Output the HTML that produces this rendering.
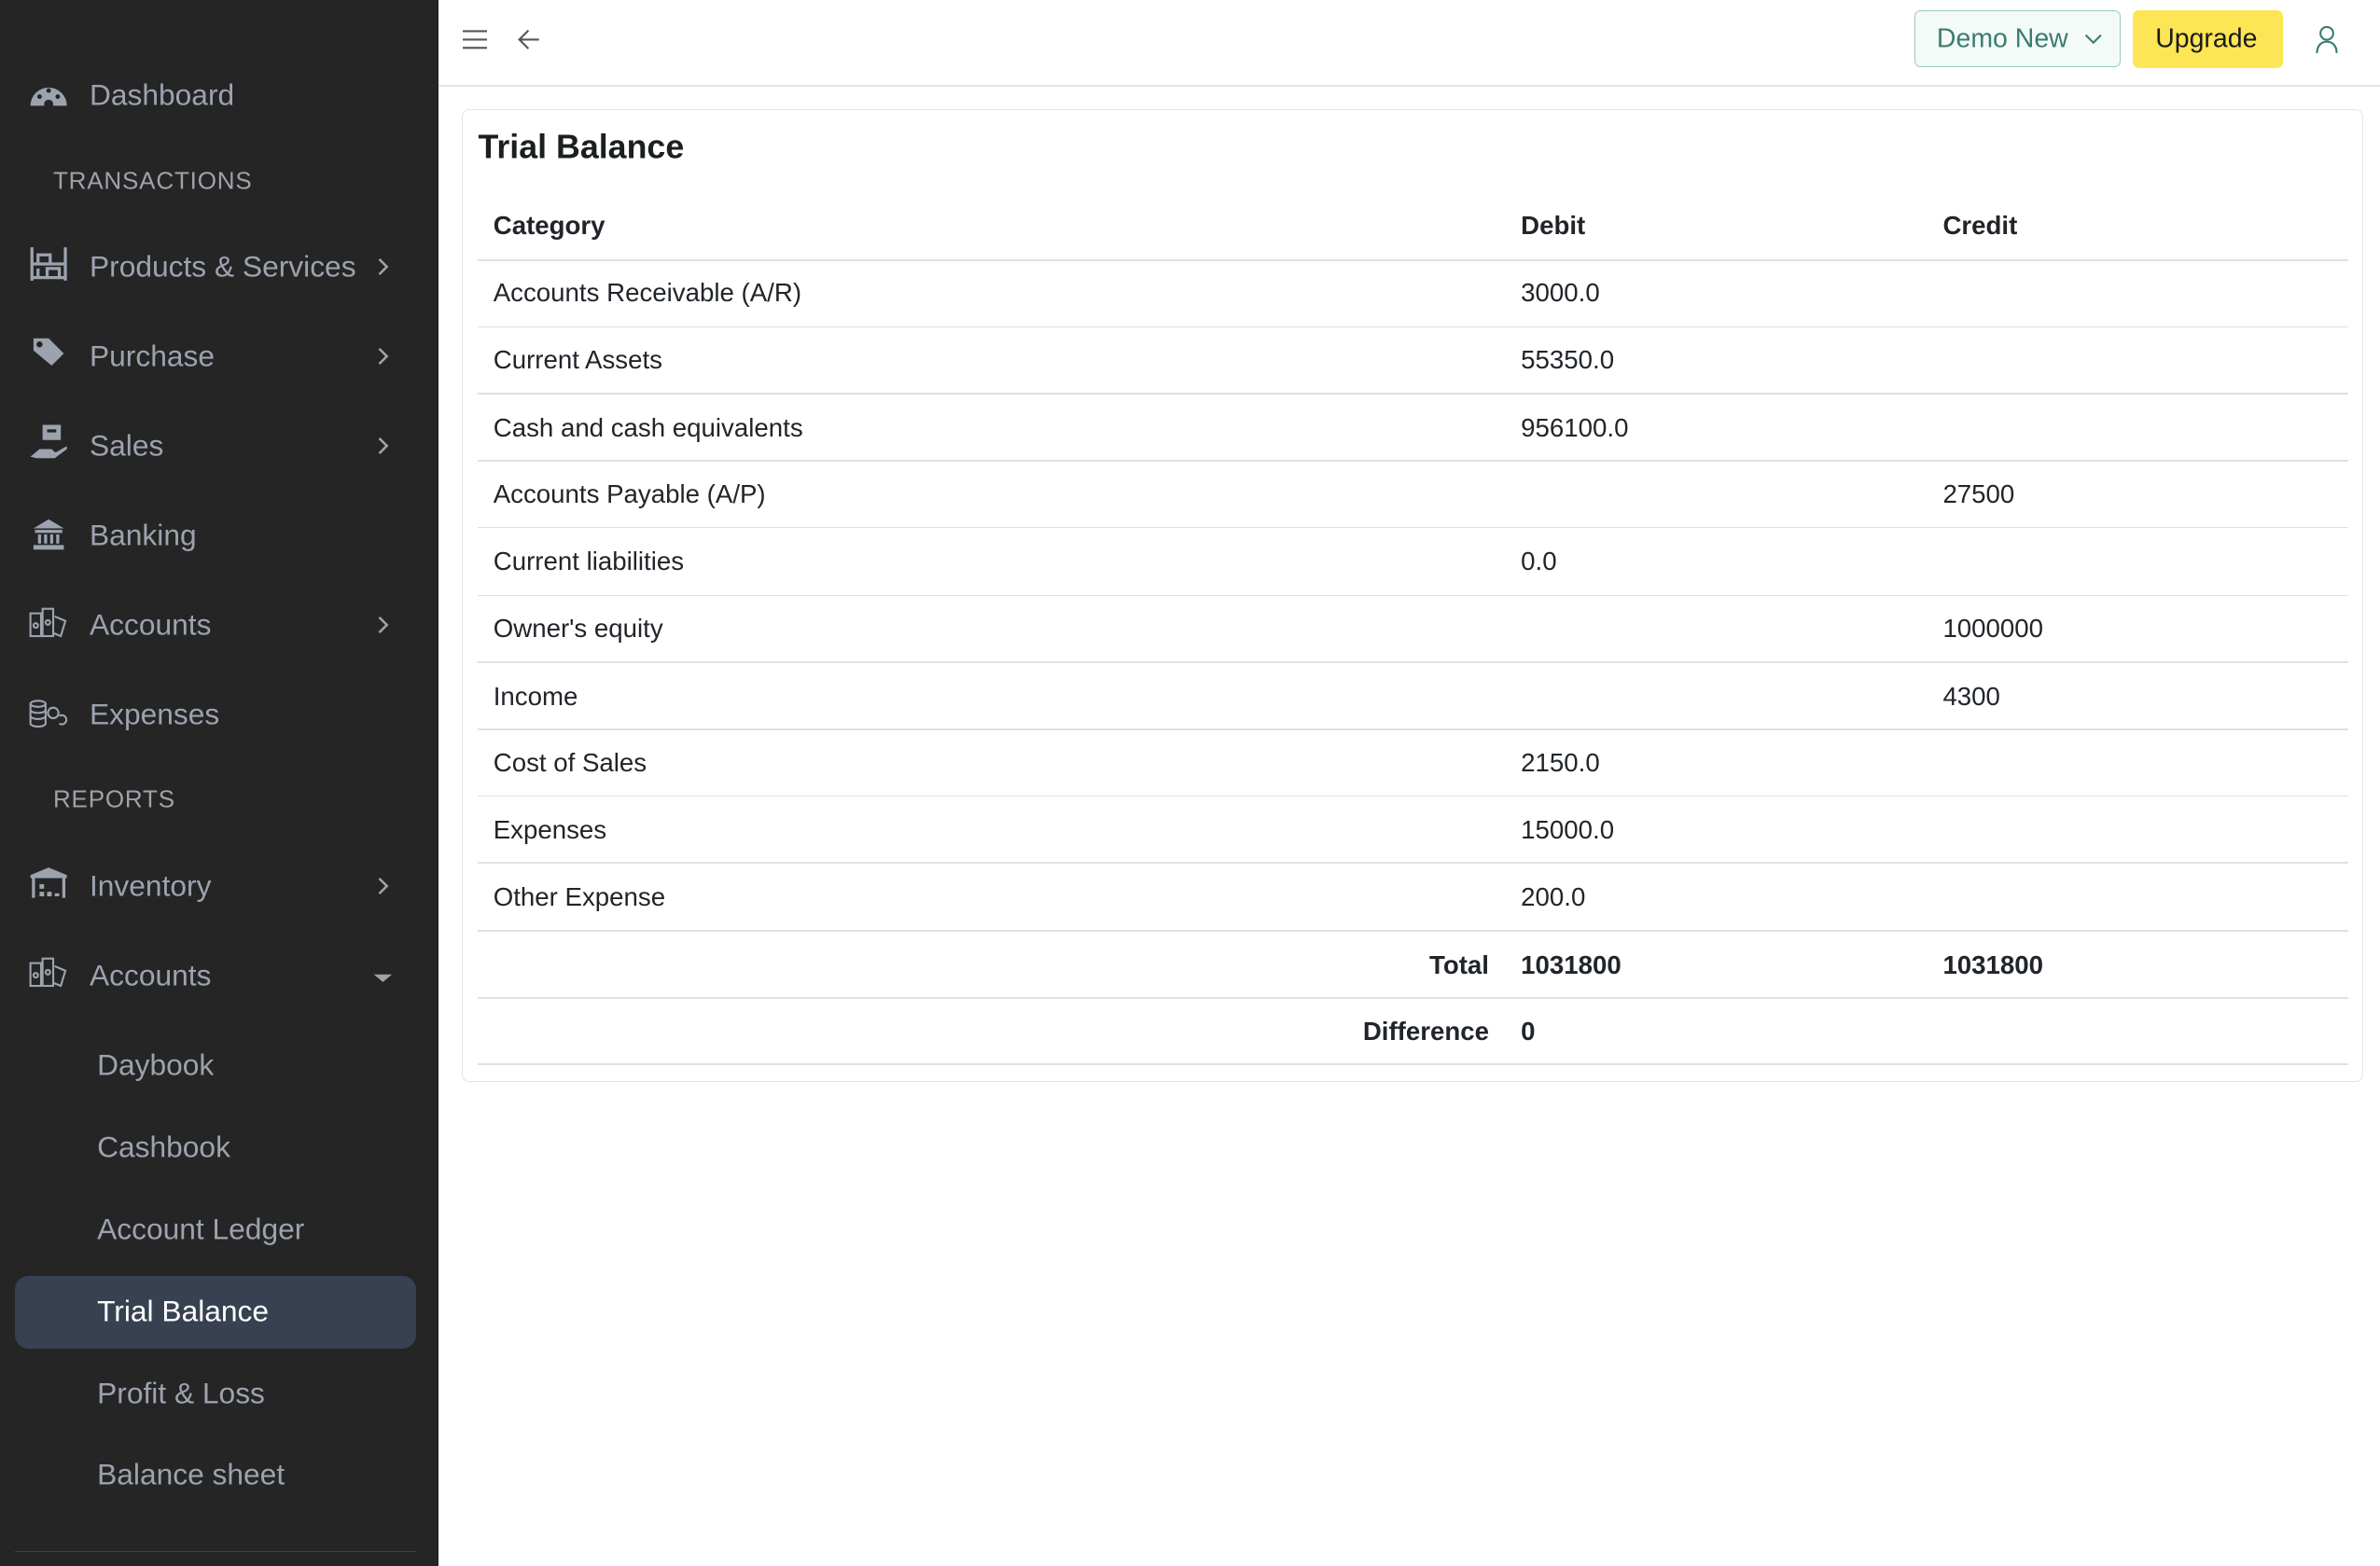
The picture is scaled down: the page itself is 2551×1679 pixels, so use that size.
<!DOCTYPE html>
<html><head><meta charset="utf-8"><style>
html,body{margin:0;padding:0;}
html{zoom:1.62691;}
body{width:1568px;height:1032px;position:relative;overflow:hidden;background:#fff;font-family:"Liberation Sans",sans-serif;}
.sb{position:absolute;left:0;top:0;width:289px;height:1032px;background:#252525;}
.it{position:absolute;left:59px;font-size:19.5px;color:#9ca3af;line-height:24px;transform:translateY(-50%);white-space:nowrap;}
.sub{left:64px;}
.hd{position:absolute;left:35px;font-size:16px;color:#a1a1aa;letter-spacing:0.5px;transform:translateY(-50%);}
.ic{position:absolute;left:19px;width:26px;height:26px;transform:translateY(-50%);}
.ch{position:absolute;left:246px;width:12px;height:12px;transform:translateY(-50%);}
.t{position:absolute;font-size:17px;color:#212529;transform:translateY(-50%);white-space:nowrap;}
.b{font-weight:bold;}
.ln{position:absolute;left:315px;width:1232px;height:1px;background:#dee2e6;}
</style></head><body>
<div class="sb">
<svg class="ic" style="top:63px" viewBox="0 0 26 26"><path d="M1 20 A12 12 0 0 1 25 20 Z" fill="#9ca3af"/><circle cx="13" cy="19" r="3" fill="#252525"/><circle cx="7" cy="14" r="1.5" fill="#252525"/><circle cx="19" cy="14" r="1.5" fill="#252525"/><circle cx="13" cy="10" r="1.5" fill="#252525"/></svg>
<div class="it" style="top:63px">Dashboard</div>
<div class="hd" style="top:119px">TRANSACTIONS</div>
<svg class="ic" style="top:174px" viewBox="0 0 26 26" fill="none" stroke="#9ca3af" stroke-width="2"><path d="M2 2v22M24 2v22M2 22h22M2 13h22M6 13V7h8v6M12 22v-6h8v6M6 22v-6"/></svg>
<div class="it" style="top:176px">Products &amp; Services</div>
<svg class="ch" style="top:176px" viewBox="0 0 12 12"><path d="M4 1l5 5-5 5" fill="none" stroke="#9ca3af" stroke-width="1.6"/></svg>
<svg class="ic" style="top:233px" viewBox="0 0 26 26"><path d="M3 3h10l10 10-8 8L3 11z" fill="#9ca3af"/><circle cx="7" cy="7" r="2" fill="#252525"/></svg>
<div class="it" style="top:235px">Purchase</div>
<svg class="ch" style="top:235px" viewBox="0 0 12 12"><path d="M4 1l5 5-5 5" fill="none" stroke="#9ca3af" stroke-width="1.6"/></svg>
<svg class="ic" style="top:292px" viewBox="0 0 26 26"><rect x="9" y="1" width="12" height="10" fill="#9ca3af"/><rect x="12" y="4" width="6" height="2" fill="#252525"/><path d="M1 22l6-5h8l2 2H10h8l7-4v2l-8 6H5z" fill="#9ca3af"/></svg>
<div class="it" style="top:294px">Sales</div>
<svg class="ch" style="top:294px" viewBox="0 0 12 12"><path d="M4 1l5 5-5 5" fill="none" stroke="#9ca3af" stroke-width="1.6"/></svg>
<svg class="ic" style="top:352px" viewBox="0 0 26 26"><path d="M3 9L13 3l10 6z" fill="#9ca3af"/><rect x="4" y="10" width="18" height="2" fill="#9ca3af"/><rect x="6" y="13" width="2" height="6" fill="#9ca3af"/><rect x="10" y="13" width="2" height="6" fill="#9ca3af"/><rect x="14" y="13" width="2" height="6" fill="#9ca3af"/><rect x="18" y="13" width="2" height="6" fill="#9ca3af"/><rect x="3" y="20" width="20" height="3" fill="#9ca3af"/></svg>
<div class="it" style="top:353px">Banking</div>
<svg class="ic" style="top:411px" viewBox="0 0 26 26" fill="none" stroke="#9ca3af" stroke-width="1.3"><rect x="1" y="6" width="7" height="15"/><rect x="9" y="3" width="7" height="18"/><path d="M17 8l7 3-3 10-5-2"/><circle cx="4.5" cy="14" r="1.5"/><circle cx="12.5" cy="12" r="1.5"/></svg>
<div class="it" style="top:412px">Accounts</div>
<svg class="ch" style="top:412px" viewBox="0 0 12 12"><path d="M4 1l5 5-5 5" fill="none" stroke="#9ca3af" stroke-width="1.6"/></svg>
<svg class="ic" style="top:471px" viewBox="0 0 26 26" fill="none" stroke="#9ca3af" stroke-width="1.3"><ellipse cx="6" cy="6" rx="5" ry="2"/><path d="M1 6v13c0 1 2 2 5 2s5-1 5-2V6M1 10c0 1 2 2 5 2s5-1 5-2M1 14c0 1 2 2 5 2s5-1 5-2"/><circle cx="16" cy="12" r="3.5"/><path d="M20 14a3 3 0 1 1 0 5"/></svg>
<div class="it" style="top:471px">Expenses</div>
<div class="hd" style="top:527px">REPORTS</div>
<svg class="ic" style="top:583px" viewBox="0 0 26 26"><path d="M1 7L13 2l12 5v2H1z" fill="#9ca3af"/><rect x="2" y="9" width="2" height="13" fill="#9ca3af"/><rect x="22" y="9" width="2" height="13" fill="#9ca3af"/><rect x="7" y="13" width="3" height="3" fill="#9ca3af"/><rect x="7" y="18" width="3" height="3" fill="#9ca3af"/><rect x="12" y="18" width="3" height="3" fill="#9ca3af"/><rect x="17" y="19" width="3" height="2" fill="#9ca3af"/></svg>
<div class="it" style="top:584px">Inventory</div>
<svg class="ch" style="top:584px" viewBox="0 0 12 12"><path d="M4 1l5 5-5 5" fill="none" stroke="#9ca3af" stroke-width="1.6"/></svg>
<svg class="ic" style="top:642px" viewBox="0 0 26 26" fill="none" stroke="#9ca3af" stroke-width="1.3"><rect x="1" y="6" width="7" height="15"/><rect x="9" y="3" width="7" height="18"/><path d="M17 8l7 3-3 10-5-2"/><circle cx="4.5" cy="14" r="1.5"/><circle cx="12.5" cy="12" r="1.5"/></svg>
<div class="it" style="top:643px">Accounts</div>
<svg class="ch" style="top:644px;left:245px;width:14px" viewBox="0 0 14 12"><path d="M1 4h12l-6 5z" fill="#9ca3af"/></svg>
<div class="it sub" style="top:702px">Daybook</div>
<div class="it sub" style="top:756px">Cashbook</div>
<div class="it sub" style="top:810px">Account Ledger</div>
<div style="position:absolute;left:10px;top:841px;width:264px;height:48px;background:#374151;border-radius:9px"></div>
<div class="it sub" style="top:864px;color:#fff">Trial Balance</div>
<div class="it sub" style="top:918px">Profit &amp; Loss</div>
<div class="it sub" style="top:972px">Balance sheet</div>
<div style="position:absolute;left:10px;top:1022px;width:264px;height:1px;background:#374151"></div>
</div>
<!-- header -->
<div style="position:absolute;left:289px;top:56px;width:1279px;height:1px;background:#e4e4e7"></div>
<svg style="position:absolute;left:305px;top:19px" width="16" height="14" viewBox="0 0 16 14"><path d="M0 1.5h16M0 7h16M0 12.5h16" stroke="#555" stroke-width="1.3"/></svg>
<svg style="position:absolute;left:341px;top:19px" width="15" height="14" viewBox="0 0 15 14"><path d="M14 7H1M7 1L1 7l6 6" fill="none" stroke="#555" stroke-width="1.3"/></svg>
<div style="position:absolute;left:1261px;top:7px;width:136px;height:37px;border:1px solid #9ccabd;border-radius:4px;background:#f3faf7;box-sizing:border-box"></div>
<div class="t" style="left:1276px;top:26px;font-size:17.5px;color:#3a7d6e">Demo New</div>
<svg style="position:absolute;left:1373px;top:22px" width="12" height="8" viewBox="0 0 12 8"><path d="M1 1l5 5 5-5" fill="none" stroke="#3a7d6e" stroke-width="1.3"/></svg>
<div style="position:absolute;left:1405px;top:7px;width:99px;height:38px;border-radius:4px;background:#fde655"></div>
<div class="t" style="left:1420px;top:26px;font-size:17.5px;color:#1a1a1a">Upgrade</div>
<svg style="position:absolute;left:1525px;top:16px" width="16" height="20" viewBox="0 0 16 20"><circle cx="8" cy="6" r="4.2" fill="none" stroke="#3a7d6e" stroke-width="1.3"/><path d="M1.5 19c0-5 3-7.5 6.5-7.5s6.5 2.5 6.5 7.5" fill="none" stroke="#3a7d6e" stroke-width="1.3"/></svg>
<!-- card -->
<div style="position:absolute;left:304px;top:72px;width:1253px;height:641px;border:1px solid #e4e4e7;border-radius:5px;box-sizing:border-box"></div>
<div class="t b" style="left:315px;top:97px;font-size:22px;color:#1b1f1f">Trial Balance</div>
<div class="t b" style="left:325px;top:149px">Category</div>
<div class="t b" style="left:1002px;top:149px">Debit</div>
<div class="t b" style="left:1280px;top:149px">Credit</div>
<div class="ln" style="top:171px"></div>
<div class="t" style="left:325px;top:193px">Accounts Receivable (A/R)</div><div class="t" style="left:1002px;top:193px">3000.0</div>
<div class="ln" style="top:215px"></div>
<div class="t" style="left:325px;top:237px">Current Assets</div><div class="t" style="left:1002px;top:237px">55350.0</div>
<div class="ln" style="top:259px"></div>
<div class="t" style="left:325px;top:282px">Cash and cash equivalents</div><div class="t" style="left:1002px;top:282px">956100.0</div>
<div class="ln" style="top:303px"></div>
<div class="t" style="left:325px;top:326px">Accounts Payable (A/P)</div><div class="t" style="left:1280px;top:326px">27500</div>
<div class="ln" style="top:347px"></div>
<div class="t" style="left:325px;top:370px">Current liabilities</div><div class="t" style="left:1002px;top:370px">0.0</div>
<div class="ln" style="top:392px"></div>
<div class="t" style="left:325px;top:414px">Owner's equity</div><div class="t" style="left:1280px;top:414px">1000000</div>
<div class="ln" style="top:436px"></div>
<div class="t" style="left:325px;top:459px">Income</div><div class="t" style="left:1280px;top:459px">4300</div>
<div class="ln" style="top:480px"></div>
<div class="t" style="left:325px;top:503px">Cost of Sales</div><div class="t" style="left:1002px;top:503px">2150.0</div>
<div class="ln" style="top:524px"></div>
<div class="t" style="left:325px;top:547px">Expenses</div><div class="t" style="left:1002px;top:547px">15000.0</div>
<div class="ln" style="top:568px"></div>
<div class="t" style="left:325px;top:591px">Other Expense</div><div class="t" style="left:1002px;top:591px">200.0</div>
<div class="ln" style="top:613px"></div>
<div class="t b" style="right:587px;top:636px">Total</div><div class="t b" style="left:1002px;top:636px">1031800</div><div class="t b" style="left:1280px;top:636px">1031800</div>
<div class="ln" style="top:657px"></div>
<div class="t b" style="right:587px;top:680px">Difference</div><div class="t b" style="left:1002px;top:680px">0</div>
<div class="ln" style="top:701px"></div>
</body></html>
